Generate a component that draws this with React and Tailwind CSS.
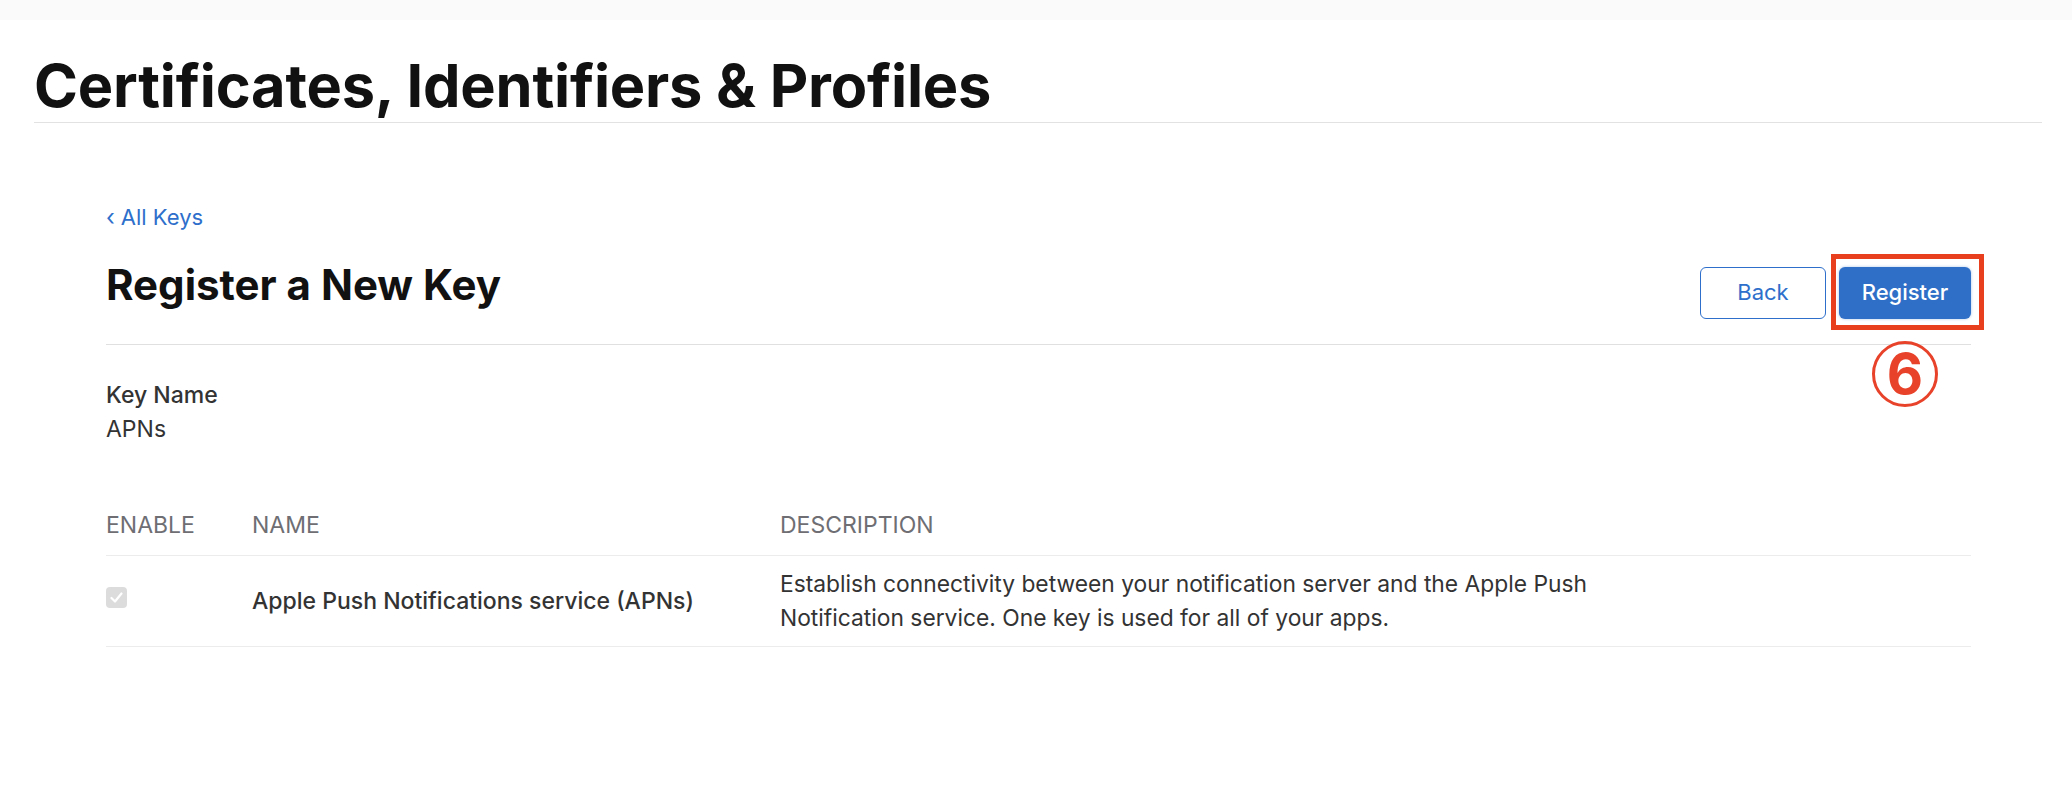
function CheckBox() {
  return (
    <div className="flex h-[21px] w-[21px] items-center justify-center rounded-[4px] bg-[#dcdcdc]">
      <svg width="13" height="11" viewBox="0 0 13 11" fill="none">
        <path d="M1.5 6l3.5 3.5 6.5-8" stroke="#ffffff" strokeWidth="2.2" strokeLinecap="round" strokeLinejoin="round" />
      </svg>
    </div>
  );
}

function App() {
  return (
    <div className="min-h-[812px] bg-white font-['Inter',sans-serif] text-[#1d1d1f]">
      <div className="h-[20px] bg-[#fafafa]" />

      <div className="ml-[34px] mr-[30px] border-b border-[#e2e2e2] pt-[36px] pb-[6px]">
        <h1 className="text-[59.5px] font-bold leading-none tracking-[-0.2px] text-[#111]">
          Certificates, Identifiers &amp; Profiles
        </h1>
      </div>

      <div className="ml-[106px] mr-[101px]">
        <a className="mt-[80px] flex items-center gap-[6px] text-[22px] leading-[28px] text-[#2e6fcb]">
          <span className="text-[23px]">‹</span>
          <span>All Keys</span>
        </a>

        <div className="mt-[36px] flex items-center justify-between border-b border-[#e0e0e0] pb-[25px]">
          <h2 className="-mt-[16px] text-[42px] font-bold leading-none text-[#111]">Register a New Key</h2>
          <div className="flex gap-[13px]">
            <button className="h-[52px] w-[126px] rounded-[6px] border border-[#2e6fcb] bg-white text-[22px] text-[#2e6fcb]">
              Back
            </button>
            <div className="relative">
              <button className="h-[52px] w-[132px] rounded-[6px] bg-[#2f6fc7] text-[22px] font-medium text-white shadow-[0_0_3px_rgba(47,111,199,0.4)]">
                Register
              </button>
              <div className="absolute -left-[8px] -top-[13px] -right-[13px] -bottom-[11px] border-[5px] border-[#e8401f]" />
              <div className="absolute left-[33px] top-[74px] flex h-[66px] w-[66px] items-center justify-center rounded-full border-[3px] border-[#e8432a] text-[56px] font-bold leading-none text-[#e8432a]">
                6
              </div>
            </div>
          </div>
        </div>

        <div className="mt-[33px] text-[23px] leading-[34px] text-[#333]">
          <div className="font-medium">Key Name</div>
          <div>APNs</div>
        </div>

        <div className="mt-[62px] text-[23px] leading-[34px]">
          <div className="grid grid-cols-[146px_528px_1fr] border-b border-[#ececec] pb-[13px] text-[#6e6e73]">
            <div>ENABLE</div>
            <div>NAME</div>
            <div>DESCRIPTION</div>
          </div>
          <div className="grid grid-cols-[146px_528px_1fr] items-center border-b border-[#ececec] py-[11px] text-[#333]">
            <div className="-mt-[6px]">
              <CheckBox />
            </div>
            <div className="font-medium">Apple Push Notifications service (APNs)</div>
            <div className="max-w-[860px] text-[22.8px]">
              Establish connectivity between your notification server and the Apple Push Notification service. One key is used for all of your apps.
            </div>
          </div>
        </div>
      </div>
    </div>
  );
}

export default App;
